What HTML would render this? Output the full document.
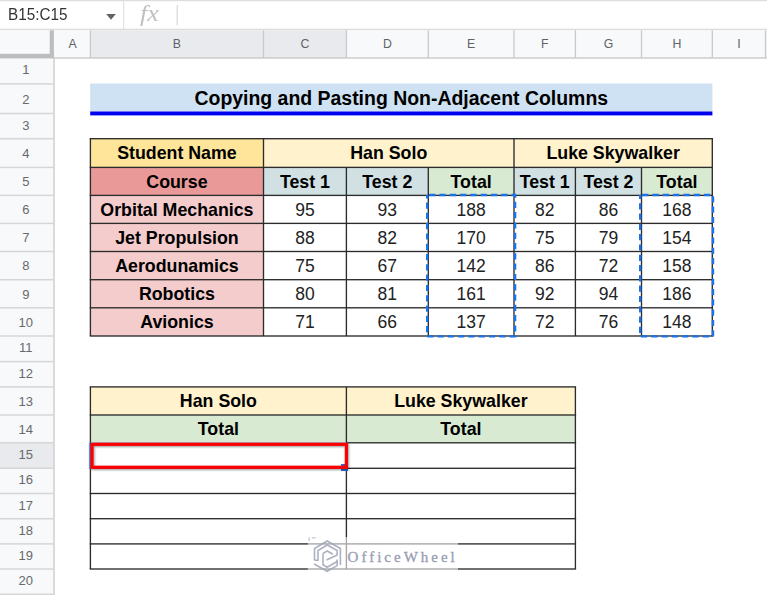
<!DOCTYPE html>
<html><head><meta charset="utf-8">
<style>
html,body{margin:0;padding:0;}
body{width:767px;height:595px;overflow:hidden;background:#fff;position:relative;font-family:"Liberation Sans",sans-serif;}
svg.bg{position:absolute;left:0;top:0;}
.abs{position:absolute;white-space:nowrap;}
.c{position:absolute;display:flex;align-items:center;justify-content:center;box-sizing:border-box;white-space:nowrap;}
.hd{color:#5f6368;font-size:12.3px;}
.rn{color:#666a6e;font-size:13px;}
.b{font-weight:bold;font-size:17.8px;color:#000;}
.n{font-size:17.5px;color:#222;}
</style></head><body>
<svg class="bg" width="767" height="595" viewBox="0 0 767 595">
<rect x="0.00" y="0.00" width="767.00" height="1.20" fill="#dddddd"/>
<rect x="0.00" y="28.70" width="767.00" height="1.60" fill="#dcdcdc"/>
<rect x="123.00" y="1.20" width="1.20" height="27.60" fill="#e2e2e2"/>
<rect x="176.60" y="5.00" width="1.20" height="20.00" fill="#d8d8d8"/>
<path d="M106.2 14.1 L115.8 14.1 L111 19.7 Z" fill="#5f6368"/>
<rect x="0.00" y="30.30" width="767.00" height="27.70" fill="#f8f9fa"/>
<rect x="90.40" y="30.30" width="173.10" height="27.70" fill="#e8eaed"/>
<rect x="263.50" y="30.30" width="82.90" height="27.70" fill="#e8eaed"/>
<rect x="89.75" y="30.30" width="1.30" height="27.70" fill="#c9c9c9"/>
<rect x="262.85" y="30.30" width="1.30" height="27.70" fill="#c9c9c9"/>
<rect x="345.75" y="30.30" width="1.30" height="27.70" fill="#c9c9c9"/>
<rect x="427.65" y="30.30" width="1.30" height="27.70" fill="#c9c9c9"/>
<rect x="513.35" y="30.30" width="1.30" height="27.70" fill="#c9c9c9"/>
<rect x="574.75" y="30.30" width="1.30" height="27.70" fill="#c9c9c9"/>
<rect x="640.85" y="30.30" width="1.30" height="27.70" fill="#c9c9c9"/>
<rect x="711.65" y="30.30" width="1.30" height="27.70" fill="#c9c9c9"/>
<rect x="764.85" y="30.30" width="1.30" height="27.70" fill="#c9c9c9"/>
<rect x="0.00" y="57.30" width="767.00" height="1.40" fill="#c9c9c9"/>
<rect x="49.70" y="30.30" width="4.20" height="28.00" fill="#bdbdbd"/>
<rect x="0.00" y="53.80" width="53.90" height="4.50" fill="#bdbdbd"/>
<rect x="0.00" y="58.60" width="53.20" height="537.00" fill="#f8f9fa"/>
<rect x="0.00" y="442.80" width="53.20" height="25.50" fill="#e8eaed"/>
<rect x="0.00" y="83.15" width="53.20" height="1.50" fill="#d6d6d6"/>
<rect x="0.00" y="112.75" width="53.20" height="1.50" fill="#d6d6d6"/>
<rect x="0.00" y="137.95" width="53.20" height="1.50" fill="#d6d6d6"/>
<rect x="0.00" y="166.65" width="53.20" height="1.50" fill="#d6d6d6"/>
<rect x="0.00" y="194.65" width="53.20" height="1.50" fill="#d6d6d6"/>
<rect x="0.00" y="222.65" width="53.20" height="1.50" fill="#d6d6d6"/>
<rect x="0.00" y="250.75" width="53.20" height="1.50" fill="#d6d6d6"/>
<rect x="0.00" y="278.95" width="53.20" height="1.50" fill="#d6d6d6"/>
<rect x="0.00" y="307.05" width="53.20" height="1.50" fill="#d6d6d6"/>
<rect x="0.00" y="335.25" width="53.20" height="1.50" fill="#d6d6d6"/>
<rect x="0.00" y="360.85" width="53.20" height="1.50" fill="#d6d6d6"/>
<rect x="0.00" y="386.15" width="53.20" height="1.50" fill="#d6d6d6"/>
<rect x="0.00" y="414.25" width="53.20" height="1.50" fill="#d6d6d6"/>
<rect x="0.00" y="442.05" width="53.20" height="1.50" fill="#d6d6d6"/>
<rect x="0.00" y="467.55" width="53.20" height="1.50" fill="#d6d6d6"/>
<rect x="0.00" y="492.75" width="53.20" height="1.50" fill="#d6d6d6"/>
<rect x="0.00" y="517.95" width="53.20" height="1.50" fill="#d6d6d6"/>
<rect x="0.00" y="543.15" width="53.20" height="1.50" fill="#d6d6d6"/>
<rect x="0.00" y="568.25" width="53.20" height="1.50" fill="#d6d6d6"/>
<rect x="0.00" y="593.55" width="53.20" height="1.50" fill="#d6d6d6"/>
<rect x="53.20" y="58.60" width="1.60" height="536.40" fill="#d2d2d2"/>
<rect x="90.20" y="83.50" width="622.20" height="28.20" fill="#cfe2f3"/>
<rect x="90.20" y="111.50" width="622.20" height="3.90" fill="#0000f0"/>
<rect x="90.40" y="138.70" width="173.10" height="28.70" fill="#ffe599"/>
<rect x="263.50" y="138.70" width="250.50" height="28.70" fill="#fff2cc"/>
<rect x="514.00" y="138.70" width="198.30" height="28.70" fill="#fff2cc"/>
<rect x="90.40" y="167.40" width="173.10" height="28.00" fill="#ea9999"/>
<rect x="263.50" y="167.40" width="82.90" height="28.00" fill="#d0e0e3"/>
<rect x="346.40" y="167.40" width="81.90" height="28.00" fill="#d0e0e3"/>
<rect x="428.30" y="167.40" width="85.70" height="28.00" fill="#d9ead3"/>
<rect x="514.00" y="167.40" width="61.40" height="28.00" fill="#d0e0e3"/>
<rect x="575.40" y="167.40" width="66.10" height="28.00" fill="#d0e0e3"/>
<rect x="641.50" y="167.40" width="70.80" height="28.00" fill="#d9ead3"/>
<rect x="90.40" y="195.40" width="173.10" height="28.00" fill="#f4cccc"/>
<rect x="90.40" y="223.40" width="173.10" height="28.10" fill="#f4cccc"/>
<rect x="90.40" y="251.50" width="173.10" height="28.20" fill="#f4cccc"/>
<rect x="90.40" y="279.70" width="173.10" height="28.10" fill="#f4cccc"/>
<rect x="90.40" y="307.80" width="173.10" height="28.20" fill="#f4cccc"/>
<rect x="89.70" y="138.02" width="623.30" height="1.35" fill="#2c2c2c"/>
<rect x="89.70" y="166.72" width="623.30" height="1.35" fill="#2c2c2c"/>
<rect x="89.70" y="194.72" width="623.30" height="1.35" fill="#2c2c2c"/>
<rect x="89.70" y="222.72" width="623.30" height="1.35" fill="#2c2c2c"/>
<rect x="89.70" y="250.82" width="623.30" height="1.35" fill="#2c2c2c"/>
<rect x="89.70" y="279.02" width="623.30" height="1.35" fill="#2c2c2c"/>
<rect x="89.70" y="307.12" width="623.30" height="1.35" fill="#2c2c2c"/>
<rect x="89.70" y="335.32" width="623.30" height="1.35" fill="#2c2c2c"/>
<rect x="89.73" y="138.70" width="1.35" height="197.30" fill="#2c2c2c"/>
<rect x="262.82" y="138.70" width="1.35" height="197.30" fill="#2c2c2c"/>
<rect x="513.33" y="138.70" width="1.35" height="197.30" fill="#2c2c2c"/>
<rect x="711.62" y="138.70" width="1.35" height="197.30" fill="#2c2c2c"/>
<rect x="345.72" y="167.40" width="1.35" height="168.60" fill="#2c2c2c"/>
<rect x="427.62" y="167.40" width="1.35" height="168.60" fill="#2c2c2c"/>
<rect x="574.73" y="167.40" width="1.35" height="168.60" fill="#2c2c2c"/>
<rect x="640.83" y="167.40" width="1.35" height="168.60" fill="#2c2c2c"/>
<rect x="427.20" y="195.00" width="87.90" height="141.40" fill="none" stroke="#1a73e8" stroke-width="2.4" stroke-dasharray="6.2 4.1" stroke-dashoffset="-2"/>
<rect x="640.20" y="195.00" width="72.80" height="141.40" fill="none" stroke="#1a73e8" stroke-width="2.4" stroke-dasharray="6.2 4.1" stroke-dashoffset="-2"/>
<rect x="90.40" y="386.90" width="256.00" height="28.10" fill="#fff2cc"/>
<rect x="346.40" y="386.90" width="229.00" height="28.10" fill="#fff2cc"/>
<rect x="90.40" y="415.00" width="256.00" height="27.80" fill="#d9ead3"/>
<rect x="346.40" y="415.00" width="229.00" height="27.80" fill="#d9ead3"/>
<rect x="89.70" y="386.22" width="486.40" height="1.35" fill="#2c2c2c"/>
<rect x="89.70" y="414.32" width="486.40" height="1.35" fill="#2c2c2c"/>
<rect x="346.40" y="442.12" width="229.70" height="1.35" fill="#2c2c2c"/>
<rect x="346.40" y="467.62" width="229.70" height="1.35" fill="#2c2c2c"/>
<rect x="89.70" y="492.82" width="486.40" height="1.35" fill="#2c2c2c"/>
<rect x="89.70" y="518.03" width="486.40" height="1.35" fill="#2c2c2c"/>
<rect x="89.70" y="543.23" width="486.40" height="1.35" fill="#2c2c2c"/>
<rect x="89.70" y="568.33" width="486.40" height="1.35" fill="#2c2c2c"/>
<rect x="89.73" y="386.90" width="1.35" height="182.10" fill="#2c2c2c"/>
<rect x="345.72" y="386.90" width="1.35" height="182.10" fill="#2c2c2c"/>
<rect x="574.73" y="386.90" width="1.35" height="182.10" fill="#2c2c2c"/>
<rect x="89.9" y="443.6" width="257.1" height="24.4" fill="none" stroke="#4a8df0" stroke-width="2" stroke-opacity="0.85"/>
<rect x="341.00" y="464.00" width="7.00" height="7.00" fill="#2a6bd6"/>
<defs><filter id="sh" x="-5%" y="-30%" width="110%" height="160%"><feDropShadow dx="0.8" dy="0.9" stdDeviation="0.9" flood-color="#000" flood-opacity="0.45"/></filter></defs>
<rect x="92.0" y="444.3" width="254.4" height="23.0" fill="none" stroke="#fb0505" stroke-width="3.2" filter="url(#sh)"/>
<rect x="307.80" y="537.10" width="150.20" height="35.20" fill="#ffffff" fill-opacity="0.58"/>
<g transform="translate(327.2,556)" stroke="#9da2b6" stroke-width="1.6" fill="none" stroke-opacity="0.85">
<path d="M-12.7 4.2 V-7.5 L0 -15 L13.2 -7.5 V9"/>
<path d="M-12.7 4.2 H-9.2 V-5.5 L0 -11 L9.9 -5.5 V-1 L-0.7 4"/>
<path d="M-13 8 L0 15.3 L9.9 9.6 V3.5"/>
<path d="M-4.2 -2.6 L0 -5 L5.6 -1.8"/>
<path d="M-4.2 -2.6 V8.7 L0 11.2 L9.9 5.5"/>
</g>
<path d="M309.2 537.3 V541 M312 537.8 H315.5" stroke="#c9ccd8" stroke-width="1" fill="none"/>
<path d="M309.2 537.3 V541 M312 537.8 H315.5" stroke="#c9ccd8" stroke-width="1" fill="none"/>
</svg>
<div class="abs" style="left:7.6px;top:5.3px;font-size:16.5px;color:#333;transform:scaleX(0.925);transform-origin:0 0;">B15:C15</div>
<div class="abs" style="left:139.6px;top:1.2px;font-family:'Liberation Serif',serif;font-style:italic;font-size:23px;color:#c0c0c0;transform:scaleX(1.13);transform-origin:0 0;">fx</div>
<div class="c hd" style="left:54.5px;top:30.5px;width:36.400000000000006px;height:27px;">A</div>
<div class="c hd" style="left:90.4px;top:30.5px;width:173.1px;height:27px;">B</div>
<div class="c hd" style="left:263.5px;top:30.5px;width:82.89999999999998px;height:27px;">C</div>
<div class="c hd" style="left:346.4px;top:30.5px;width:81.90000000000003px;height:27px;">D</div>
<div class="c hd" style="left:428.3px;top:30.5px;width:85.69999999999999px;height:27px;">E</div>
<div class="c hd" style="left:514px;top:30.5px;width:61.39999999999998px;height:27px;">F</div>
<div class="c hd" style="left:575.4px;top:30.5px;width:66.10000000000002px;height:27px;">G</div>
<div class="c hd" style="left:641.5px;top:30.5px;width:70.79999999999995px;height:27px;">H</div>
<div class="c hd" style="left:712.3px;top:30.5px;width:53.200000000000045px;height:27px;">I</div>
<div class="c rn" style="left:0;top:57.00px;width:51.5px;height:25.90px;">1</div>
<div class="c rn" style="left:0;top:84.25px;width:51.5px;height:29.60px;">2</div>
<div class="c rn" style="left:0;top:112.50px;width:51.5px;height:25.20px;">3</div>
<div class="c rn" style="left:0;top:139.05px;width:51.5px;height:28.70px;">4</div>
<div class="c rn" style="left:0;top:167.75px;width:51.5px;height:28.00px;">5</div>
<div class="c rn" style="left:0;top:195.75px;width:51.5px;height:28.00px;">6</div>
<div class="c rn" style="left:0;top:223.75px;width:51.5px;height:28.10px;">7</div>
<div class="c rn" style="left:0;top:251.85px;width:51.5px;height:28.20px;">8</div>
<div class="c rn" style="left:0;top:280.05px;width:51.5px;height:28.10px;">9</div>
<div class="c rn" style="left:0;top:308.15px;width:51.5px;height:28.20px;">10</div>
<div class="c rn" style="left:0;top:335.00px;width:51.5px;height:25.60px;">11</div>
<div class="c rn" style="left:0;top:360.60px;width:51.5px;height:25.30px;">12</div>
<div class="c rn" style="left:0;top:387.25px;width:51.5px;height:28.10px;">13</div>
<div class="c rn" style="left:0;top:415.35px;width:51.5px;height:27.80px;">14</div>
<div class="c rn" style="left:0;top:441.80px;width:51.5px;height:25.50px;">15</div>
<div class="c rn" style="left:0;top:467.30px;width:51.5px;height:25.20px;">16</div>
<div class="c rn" style="left:0;top:492.50px;width:51.5px;height:25.20px;">17</div>
<div class="c rn" style="left:0;top:517.70px;width:51.5px;height:25.20px;">18</div>
<div class="c rn" style="left:0;top:542.90px;width:51.5px;height:25.10px;">19</div>
<div class="c rn" style="left:0;top:568.00px;width:51.5px;height:25.30px;">20</div>
<div class="c b" style="left:90.20px;top:84.45px;width:622.20px;height:28.60px;font-size:19.45px;">Copying and Pasting Non-Adjacent Columns</div>
<div class="c b" style="left:90.40px;top:139.65px;width:173.10px;height:28.70px;">Student Name</div>
<div class="c b" style="left:263.50px;top:139.65px;width:250.50px;height:28.70px;">Han Solo</div>
<div class="c b" style="left:514.00px;top:139.65px;width:198.30px;height:28.70px;">Luke Skywalker</div>
<div class="c b" style="left:90.40px;top:168.35px;width:173.10px;height:28.00px;">Course</div>
<div class="c b" style="left:263.50px;top:168.35px;width:82.90px;height:28.00px;">Test 1</div>
<div class="c b" style="left:346.40px;top:168.35px;width:81.90px;height:28.00px;">Test 2</div>
<div class="c b" style="left:428.30px;top:168.35px;width:85.70px;height:28.00px;">Total</div>
<div class="c b" style="left:514.00px;top:168.35px;width:61.40px;height:28.00px;">Test 1</div>
<div class="c b" style="left:575.40px;top:168.35px;width:66.10px;height:28.00px;">Test 2</div>
<div class="c b" style="left:641.50px;top:168.35px;width:70.80px;height:28.00px;">Total</div>
<div class="c b" style="left:90.40px;top:196.35px;width:173.10px;height:28.00px;">Orbital Mechanics</div>
<div class="c n" style="left:263.50px;top:196.35px;width:82.90px;height:28.00px;">95</div>
<div class="c n" style="left:346.40px;top:196.35px;width:81.90px;height:28.00px;">93</div>
<div class="c n" style="left:428.30px;top:196.35px;width:85.70px;height:28.00px;">188</div>
<div class="c n" style="left:514.00px;top:196.35px;width:61.40px;height:28.00px;">82</div>
<div class="c n" style="left:575.40px;top:196.35px;width:66.10px;height:28.00px;">86</div>
<div class="c n" style="left:641.50px;top:196.35px;width:70.80px;height:28.00px;">168</div>
<div class="c b" style="left:90.40px;top:224.35px;width:173.10px;height:28.10px;">Jet Propulsion</div>
<div class="c n" style="left:263.50px;top:224.35px;width:82.90px;height:28.10px;">88</div>
<div class="c n" style="left:346.40px;top:224.35px;width:81.90px;height:28.10px;">82</div>
<div class="c n" style="left:428.30px;top:224.35px;width:85.70px;height:28.10px;">170</div>
<div class="c n" style="left:514.00px;top:224.35px;width:61.40px;height:28.10px;">75</div>
<div class="c n" style="left:575.40px;top:224.35px;width:66.10px;height:28.10px;">79</div>
<div class="c n" style="left:641.50px;top:224.35px;width:70.80px;height:28.10px;">154</div>
<div class="c b" style="left:90.40px;top:252.45px;width:173.10px;height:28.20px;">Aerodunamics</div>
<div class="c n" style="left:263.50px;top:252.45px;width:82.90px;height:28.20px;">75</div>
<div class="c n" style="left:346.40px;top:252.45px;width:81.90px;height:28.20px;">67</div>
<div class="c n" style="left:428.30px;top:252.45px;width:85.70px;height:28.20px;">142</div>
<div class="c n" style="left:514.00px;top:252.45px;width:61.40px;height:28.20px;">86</div>
<div class="c n" style="left:575.40px;top:252.45px;width:66.10px;height:28.20px;">72</div>
<div class="c n" style="left:641.50px;top:252.45px;width:70.80px;height:28.20px;">158</div>
<div class="c b" style="left:90.40px;top:280.65px;width:173.10px;height:28.10px;">Robotics</div>
<div class="c n" style="left:263.50px;top:280.65px;width:82.90px;height:28.10px;">80</div>
<div class="c n" style="left:346.40px;top:280.65px;width:81.90px;height:28.10px;">81</div>
<div class="c n" style="left:428.30px;top:280.65px;width:85.70px;height:28.10px;">161</div>
<div class="c n" style="left:514.00px;top:280.65px;width:61.40px;height:28.10px;">92</div>
<div class="c n" style="left:575.40px;top:280.65px;width:66.10px;height:28.10px;">94</div>
<div class="c n" style="left:641.50px;top:280.65px;width:70.80px;height:28.10px;">186</div>
<div class="c b" style="left:90.40px;top:308.75px;width:173.10px;height:28.20px;">Avionics</div>
<div class="c n" style="left:263.50px;top:308.75px;width:82.90px;height:28.20px;">71</div>
<div class="c n" style="left:346.40px;top:308.75px;width:81.90px;height:28.20px;">66</div>
<div class="c n" style="left:428.30px;top:308.75px;width:85.70px;height:28.20px;">137</div>
<div class="c n" style="left:514.00px;top:308.75px;width:61.40px;height:28.20px;">72</div>
<div class="c n" style="left:575.40px;top:308.75px;width:66.10px;height:28.20px;">76</div>
<div class="c n" style="left:641.50px;top:308.75px;width:70.80px;height:28.20px;">148</div>
<div class="c b" style="left:90.40px;top:387.85px;width:256.00px;height:28.10px;">Han Solo</div>
<div class="c b" style="left:346.40px;top:387.85px;width:229.00px;height:28.10px;">Luke Skywalker</div>
<div class="c b" style="left:90.40px;top:415.95px;width:256.00px;height:27.80px;">Total</div>
<div class="c b" style="left:346.40px;top:415.95px;width:229.00px;height:27.80px;">Total</div>
<div class="abs" style="left:347.6px;top:548.9px;font-family:'Liberation Serif',serif;font-size:15px;letter-spacing:3px;color:#979db2;-webkit-text-stroke:0.3px #979db2;">OfficeWheel</div>
</body></html>
